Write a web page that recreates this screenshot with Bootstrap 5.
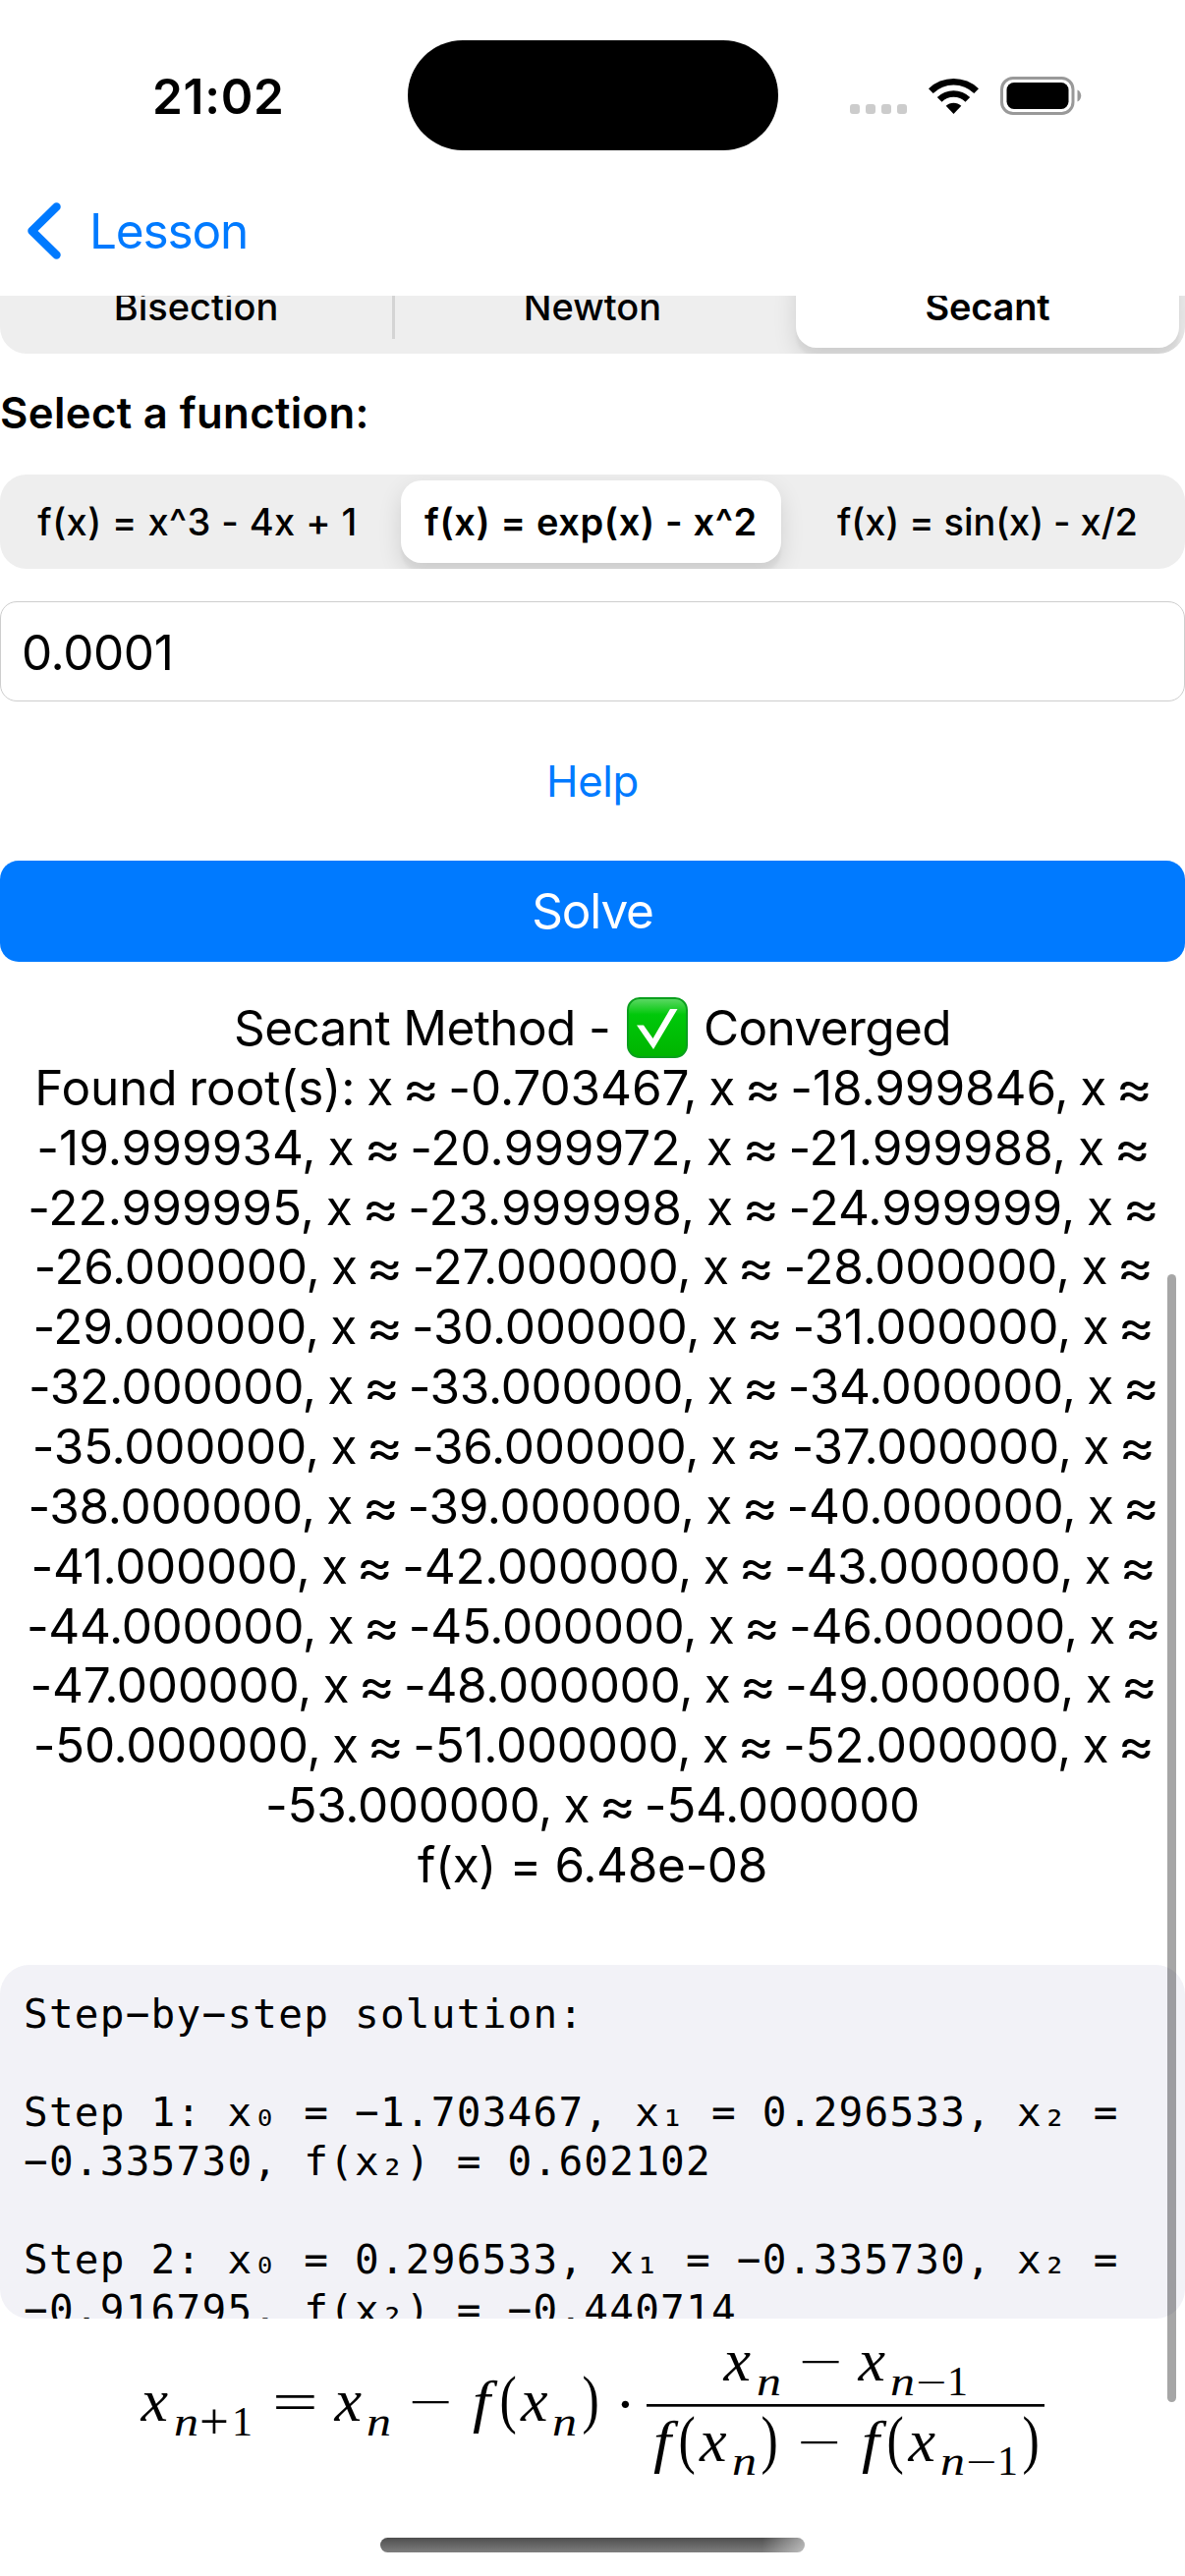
<!DOCTYPE html>
<html lang="en">
<head>
<meta charset="utf-8">
<meta name="viewport" content="width=device-width, initial-scale=1">
<title>Lesson</title>
<link href="https://cdn.jsdelivr.net/npm/bootstrap@5.3.0/dist/css/bootstrap.min.css" rel="stylesheet">
<style>
  :root { --ios-blue: #007aff; --ios-fill: #eeeeee; --ios-card: #f2f2f7; }
  body { width: 1206px; height: 2622px; overflow: hidden; background: #fff; color: #000; font-family: Inter, "Liberation Sans", sans-serif; font-size: 49.5px; line-height: 60.86px; }
  .status-bar { height: 194px; }
  .clock { width: 260px; margin-left: 155px; font-weight: 600; letter-spacing: .7px; padding-top: 2px; }
  .island { width: 377px; height: 112px; border-radius: 56px; background: #000; margin-right: 73px; }
  .dots { gap: 6px; margin: 28px 22px 0 0; }
  .dots i { width: 10px; height: 10px; border-radius: 3px; background: #ccc; }
  .wifi { margin-right: 22px; }
  .top-nav { height: 107px; padding: 0 0 25px 27px; }
  .ios-link { color: var(--ios-blue); }
  .back-link { letter-spacing: -1.15px; }
  .back-link svg { margin-right: 28px; }
  .scroll-area { height: 2249px; }
  .segmented { height: 96px; border-radius: 27px; background: var(--ios-fill); font-size: 38px; line-height: 84px; font-weight: 450; }
  .segmented > div { width: 402px; padding: 6px; }
  .segmented .picked { background: #fff; border-radius: 21px; font-weight: 600; box-shadow: 0 9px 24px rgba(0,0,0,.12), 0 9px 3px rgba(0,0,0,.04); }
  .segmented .mid { padding-right: 9px; }
  .segmented .rule { border-right: 3px solid #d4d4d4; margin: 15px 0; line-height: 66px; padding-top: 0; padding-bottom: 0; }
  .methods { margin-top: -37px; letter-spacing: 0; }
  .methods .picked { letter-spacing: -.2px; }
  .fn-a { letter-spacing: .4px; }
  .fn-b { letter-spacing: .63px; }
  .fn-c { letter-spacing: -.1px; }
  .field-label { height: 120px; line-height: 122px; margin-bottom: 3px; font-size: 43.7px; font-weight: 600; letter-spacing: .35px; }
  .tolerance { height: 102px; margin-top: 33px; border: 1px solid #cdcdcd; border-radius: 17px; padding: 0 21px; line-height: 102px; letter-spacing: -.4px; }
  .help-row { height: 162px; padding-top: 2px; font-size: 43.7px; letter-spacing: -.35px; }
  .solve { height: 103px; border: 0; border-radius: 19px; background: var(--ios-blue); font-size: 49.5px; font-weight: 400; letter-spacing: -1.15px; }
  .result { margin-top: 37px; height: 984px; letter-spacing: -.32px; word-spacing: -2px; }
  .result div { height: 60.86px; white-space: nowrap; }
  .result div:nth-child(1) { letter-spacing: -.6px; word-spacing: 0; }
  .result div:nth-child(2) { letter-spacing: -.11px; }
  .result div:nth-child(3) { letter-spacing: .01px; }
  .result div:nth-child(4) { letter-spacing: -.02px; }
  .result div:nth-child(5), .result div:nth-child(6), .result div:nth-child(8) { letter-spacing: -.26px; }
  .result div:nth-child(14) { letter-spacing: -.34px; }
  .result div:nth-child(15) { letter-spacing: -.37px; word-spacing: 0; }
  .result span { display: inline-block; transform: scaleX(1.15); }
  .result svg { width: 62px; height: 62px; margin: -6px 3px 0; vertical-align: -13px; }
  .steps { height: 360px; border-radius: 30px; background: var(--ios-card); padding: 25px 24px; font: 41px/50.1px "DejaVu Sans Mono", monospace; letter-spacing: 1.24px; white-space: pre; }
  .formula { font-family: "Liberation Serif", serif; height: 190px; }
  .formula .v { font: italic 62px "Liberation Serif", serif; }
  .formula .s { font: italic 41px "Liberation Serif", serif; }
  .formula .f { font: italic 59px "Liberation Serif", serif; }
  .formula .p { font: 65px "Liberation Serif", serif; }
  .formula .d { font: 42px "Liberation Serif", serif; }
  .formula .m { font: 44px "Liberation Serif", serif; }
  .formula .ms { font: 36px "Liberation Serif", serif; }
  .formula .eq { font: 58px "Liberation Serif", serif; }
  .formula .pl { font: 53px "Liberation Serif", serif; }
  .scroll-thumb { right: 9px; top: 1297px; width: 9px; height: 1148px; border-radius: 5px; background: rgba(0,0,0,.35); }
  .home-bar { width: 432px; height: 15px; margin: 33px auto 0; border-radius: 8px; background: linear-gradient(90deg, transparent 90%, rgba(255,255,255,.5)), linear-gradient(#4e4e4e, #7e7e7e); }
</style>
<script src="https://cdn.jsdelivr.net/npm/bootstrap@5.3.0/dist/js/bootstrap.bundle.min.js"></script>
</head>
<body>
<header class="status-bar d-flex align-items-center">
  <div class="clock">21:02</div>
  <div class="island"></div>
  <div class="dots d-flex"><i></i><i></i><i></i><i></i></div>
  <svg class="wifi" width="51" height="37" viewBox="0 0 51 37">
    <path d="M0 11.3A36.500 36.500 0 0 1 51 11.300L46.300 16A29.800 29.800 0 0 0 4.700 16Z"/>
    <path d="M8.800 20A23.800 23.800 0 0 1 42.200 20L37.500 24.700A17.100 17.100 0 0 0 13.500 24.700Z"/>
    <path d="M17.700 28.800A11.200 11.200 0 0 1 33.300 28.800L25.500 37Z"/>
  </svg>
  <svg width="83" height="39" viewBox="0 0 83 39">
    <rect x="1.500" y="1.500" width="72.500" height="36" rx="11.500" fill="none" stroke="#999" stroke-width="3"/>
    <rect x="6.500" y="6" width="63" height="27" rx="7.500"/>
    <path d="M78.500 13.500C83.500 15.500 83.500 23.500 78.500 25.500Z" fill="#999"/>
  </svg>
</header>
<nav class="top-nav d-flex align-items-center">
  <a class="ios-link back-link d-flex align-items-center text-decoration-none" href="#">
    <svg width="36" height="58" viewBox="0 0 36 58" fill="none" stroke="currentColor" stroke-width="8.500" stroke-linecap="round" stroke-linejoin="round"><path d="M30.500 4.500L5.500 29L30.500 53.500"/></svg>
    <span>Lesson</span>
  </a>
</nav>
<main class="scroll-area overflow-hidden">
  <div class="segmented methods d-flex text-center overflow-hidden">
    <div class="rule">Bisection</div>
    <div>Newton</div>
    <div><div class="picked">Secant</div></div>
  </div>
  <div class="field-label">Select a function:</div>
  <div class="segmented d-flex text-center overflow-hidden text-nowrap">
    <div class="fn-a">f(x) = x^3 - 4x + 1</div>
    <div class="mid"><div class="picked fn-b">f(x) = exp(x) - x^2</div></div>
    <div class="fn-c">f(x) = sin(x) - x/2</div>
  </div>
  <div class="tolerance">0.0001</div>
  <div class="help-row d-flex align-items-center justify-content-center"><a class="ios-link text-decoration-none" href="#">Help</a></div>
  <button class="solve btn btn-primary w-100 d-flex align-items-center justify-content-center" type="button">Solve</button>
  <section class="result text-center">
    <div>Secant Method - <svg viewBox="0 0 62 62"><defs><linearGradient id="g" x2="0" y2="1"><stop offset="0" stop-color="#5fd867"/><stop offset=".28" stop-color="#00c80a"/><stop offset="1" stop-color="#00b400"/></linearGradient></defs><rect x="1" y="1" width="60" height="60" rx="12" fill="url(#g)" stroke="#0a9f1d" stroke-width="2"/><path d="M10 28.500H17L26.500 42L44 12H51.500L27 53Z" fill="#fff"/></svg> Converged</div>
    <div>Found root(s): x <span>≈</span> -0.703467, x <span>≈</span> -18.999846, x <span>≈</span></div>
    <div>-19.999934, x <span>≈</span> -20.999972, x <span>≈</span> -21.999988, x <span>≈</span></div>
    <div>-22.999995, x <span>≈</span> -23.999998, x <span>≈</span> -24.999999, x <span>≈</span></div>
    <div>-26.000000, x <span>≈</span> -27.000000, x <span>≈</span> -28.000000, x <span>≈</span></div>
    <div>-29.000000, x <span>≈</span> -30.000000, x <span>≈</span> -31.000000, x <span>≈</span></div>
    <div>-32.000000, x <span>≈</span> -33.000000, x <span>≈</span> -34.000000, x <span>≈</span></div>
    <div>-35.000000, x <span>≈</span> -36.000000, x <span>≈</span> -37.000000, x <span>≈</span></div>
    <div>-38.000000, x <span>≈</span> -39.000000, x <span>≈</span> -40.000000, x <span>≈</span></div>
    <div>-41.000000, x <span>≈</span> -42.000000, x <span>≈</span> -43.000000, x <span>≈</span></div>
    <div>-44.000000, x <span>≈</span> -45.000000, x <span>≈</span> -46.000000, x <span>≈</span></div>
    <div>-47.000000, x <span>≈</span> -48.000000, x <span>≈</span> -49.000000, x <span>≈</span></div>
    <div>-50.000000, x <span>≈</span> -51.000000, x <span>≈</span> -52.000000, x <span>≈</span></div>
    <div>-53.000000, x <span>≈</span> -54.000000</div>
    <div>f(x) = 6.48e-08</div>
  </section>
  <section class="steps overflow-hidden">Step−by−step solution:

Step 1: x₀ = −1.703467, x₁ = 0.296533, x₂ =
−0.335730, f(x₂) = 0.602102

Step 2: x₀ = 0.296533, x₁ = −0.335730, x₂ =
−0.916795, f(x₂) = −0.440714</section>
  <svg class="formula d-block" width="1206" height="190" viewBox="0 2360 1206 190">
    <text class="v" x="143.500" y="2464">x</text>
    <text class="s" x="177" y="2479" textLength="25" lengthAdjust="spacingAndGlyphs">n</text>
    <text class="pl" x="203" y="2482">+</text>
    <text class="d" x="236" y="2479">1</text>
    <text class="eq" x="277" y="2464" textLength="46.700" lengthAdjust="spacingAndGlyphs">=</text>
    <text class="v" x="340.500" y="2464">x</text>
    <text class="s" x="373" y="2479" textLength="25" lengthAdjust="spacingAndGlyphs">n</text>
    <text class="m" x="416" y="2460" textLength="44.700" lengthAdjust="spacingAndGlyphs">−</text>
    <text class="f" x="481" y="2464" textLength="18" lengthAdjust="spacingAndGlyphs">f</text>
    <text class="p" x="508.500" y="2464" textLength="17.300" lengthAdjust="spacingAndGlyphs">(</text>
    <text class="v" x="530" y="2464">x</text>
    <text class="s" x="562" y="2479" textLength="25" lengthAdjust="spacingAndGlyphs">n</text>
    <text class="p" x="592.500" y="2464" textLength="17.300" lengthAdjust="spacingAndGlyphs">)</text>
    <text class="v" x="635.400" y="2468" text-anchor="middle">·</text>
    <text class="v" x="736.500" y="2423">x</text>
    <text class="s" x="770" y="2438" textLength="25" lengthAdjust="spacingAndGlyphs">n</text>
    <text class="m" x="813.100" y="2419" textLength="44.700" lengthAdjust="spacingAndGlyphs">−</text>
    <text class="v" x="873.500" y="2423">x</text>
    <text class="s" x="906" y="2438" textLength="25" lengthAdjust="spacingAndGlyphs">n</text>
    <text class="ms" x="932" y="2436.500" textLength="31.300" lengthAdjust="spacingAndGlyphs">−</text>
    <text class="d" x="964" y="2438">1</text>
    <rect x="658" y="2447" width="405" height="2.700"/>
    <text class="f" x="665" y="2505" textLength="18" lengthAdjust="spacingAndGlyphs">f</text>
    <text class="p" x="690.400" y="2505" textLength="17.300" lengthAdjust="spacingAndGlyphs">(</text>
    <text class="v" x="712" y="2505">x</text>
    <text class="s" x="745" y="2519" textLength="25" lengthAdjust="spacingAndGlyphs">n</text>
    <text class="p" x="774.500" y="2505" textLength="17.300" lengthAdjust="spacingAndGlyphs">)</text>
    <text class="m" x="811.600" y="2501" textLength="44.700" lengthAdjust="spacingAndGlyphs">−</text>
    <text class="f" x="877" y="2505" textLength="18" lengthAdjust="spacingAndGlyphs">f</text>
    <text class="p" x="902.400" y="2505" textLength="17.300" lengthAdjust="spacingAndGlyphs">(</text>
    <text class="v" x="924.500" y="2505">x</text>
    <text class="s" x="957" y="2519" textLength="25" lengthAdjust="spacingAndGlyphs">n</text>
    <text class="ms" x="983" y="2518" textLength="31.300" lengthAdjust="spacingAndGlyphs">−</text>
    <text class="d" x="1015" y="2519">1</text>
    <text class="p" x="1040.500" y="2505" textLength="17.300" lengthAdjust="spacingAndGlyphs">)</text>
  </svg>
</main>
<div class="home-bar"></div>
<div class="scroll-thumb position-absolute"></div>
</body>
</html>
